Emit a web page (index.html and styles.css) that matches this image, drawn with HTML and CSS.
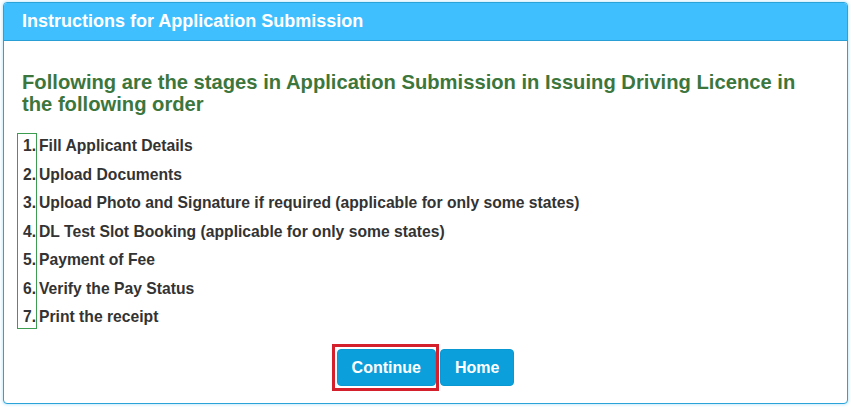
FILE: index.html
```html
<!DOCTYPE html>
<html>
<head>
<meta charset="utf-8">
<link rel="stylesheet" href="styles.css">
</head>
<body>
<div class="panel">
  <div class="panel-heading">Instructions for Application Submission</div>
  <div class="panel-body">
    <h4 class="lead">Following are the stages in Application Submission in Issuing Driving Licence in the following order</h4>
    <div class="steps">
      <div class="nums">
        <span>1.</span><span>2.</span><span>3.</span><span>4.</span><span>5.</span><span>6.</span><span>7.</span>
      </div>
      <div class="texts">
        <span>Fill Applicant Details</span>
        <span>Upload Documents</span>
        <span>Upload Photo and Signature if required (applicable for only some states)</span>
        <span>DL Test Slot Booking (applicable for only some states)</span>
        <span>Payment of Fee</span>
        <span>Verify the Pay Status</span>
        <span>Print the receipt</span>
      </div>
    </div>
    <div class="actions">
      <button class="btn btn-focus">Continue</button>
      <button class="btn">Home</button>
    </div>
  </div>
</div>
</body>
</html>
```
FILE: styles.css
```css
html, body {
  margin: 0;
  padding: 0;
  background: #ffffff;
}
body {
  padding: 2px 3px 3px 3px;
  font-family: "Liberation Sans", Arial, sans-serif;
}
.panel {
  border: 1px solid #2aa3d8;
  border-radius: 4px;
  background: #fff;
  box-shadow: 0 0 3px 1px #c9ebfa;
  overflow: hidden;
}
.panel-heading {
  background: #40bfff;
  color: #fff;
  font-weight: bold;
  font-size: 18px;
  line-height: 20px;
  height: 38px;
  box-sizing: border-box;
  padding: 8px 18px;
  border-bottom: 1px solid #2a9fd6;
}
.panel-body {
  padding: 30px 18px 17px 13px;
}
.lead {
  margin: 0 0 18px 5px;
  color: #3c763d;
  font-size: 20.2px;
  line-height: 22px;
  font-weight: bold;
}
.steps {
  display: flex;
  align-items: flex-start;
  font-size: 15.7px;
  font-weight: bold;
  color: #333;
  line-height: 23px;
}
.nums {
  display: flex;
  flex-direction: column;
  gap: 5.5px;
  border: 1px solid #3c9c50;
  width: 18px;
  align-items: flex-end;
  padding-right: 0;
  box-sizing: content-box;
}
.texts {
  display: flex;
  flex-direction: column;
  gap: 5.5px;
  padding-top: 1px;
  padding-left: 2px;
}
.actions {
  display: flex;
  justify-content: center;
  gap: 4px;
  margin-top: 20px;
  padding-left: 5px;
}
.btn {
  font-family: "Liberation Sans", Arial, sans-serif;
  font-weight: bold;
  font-size: 16px;
  color: #fff;
  background: #0ba0dc;
  border: 1px solid #0a98d2;
  border-radius: 4px;
  height: 37px;
  padding: 0 14px;
}
.btn-focus {
  position: relative;
  outline: none;
}
.btn-focus::after {
  content: "";
  position: absolute;
  top: -6px;
  left: -6px;
  right: -4px;
  bottom: -6px;
  border: 3px solid #d4202c;
}
```
